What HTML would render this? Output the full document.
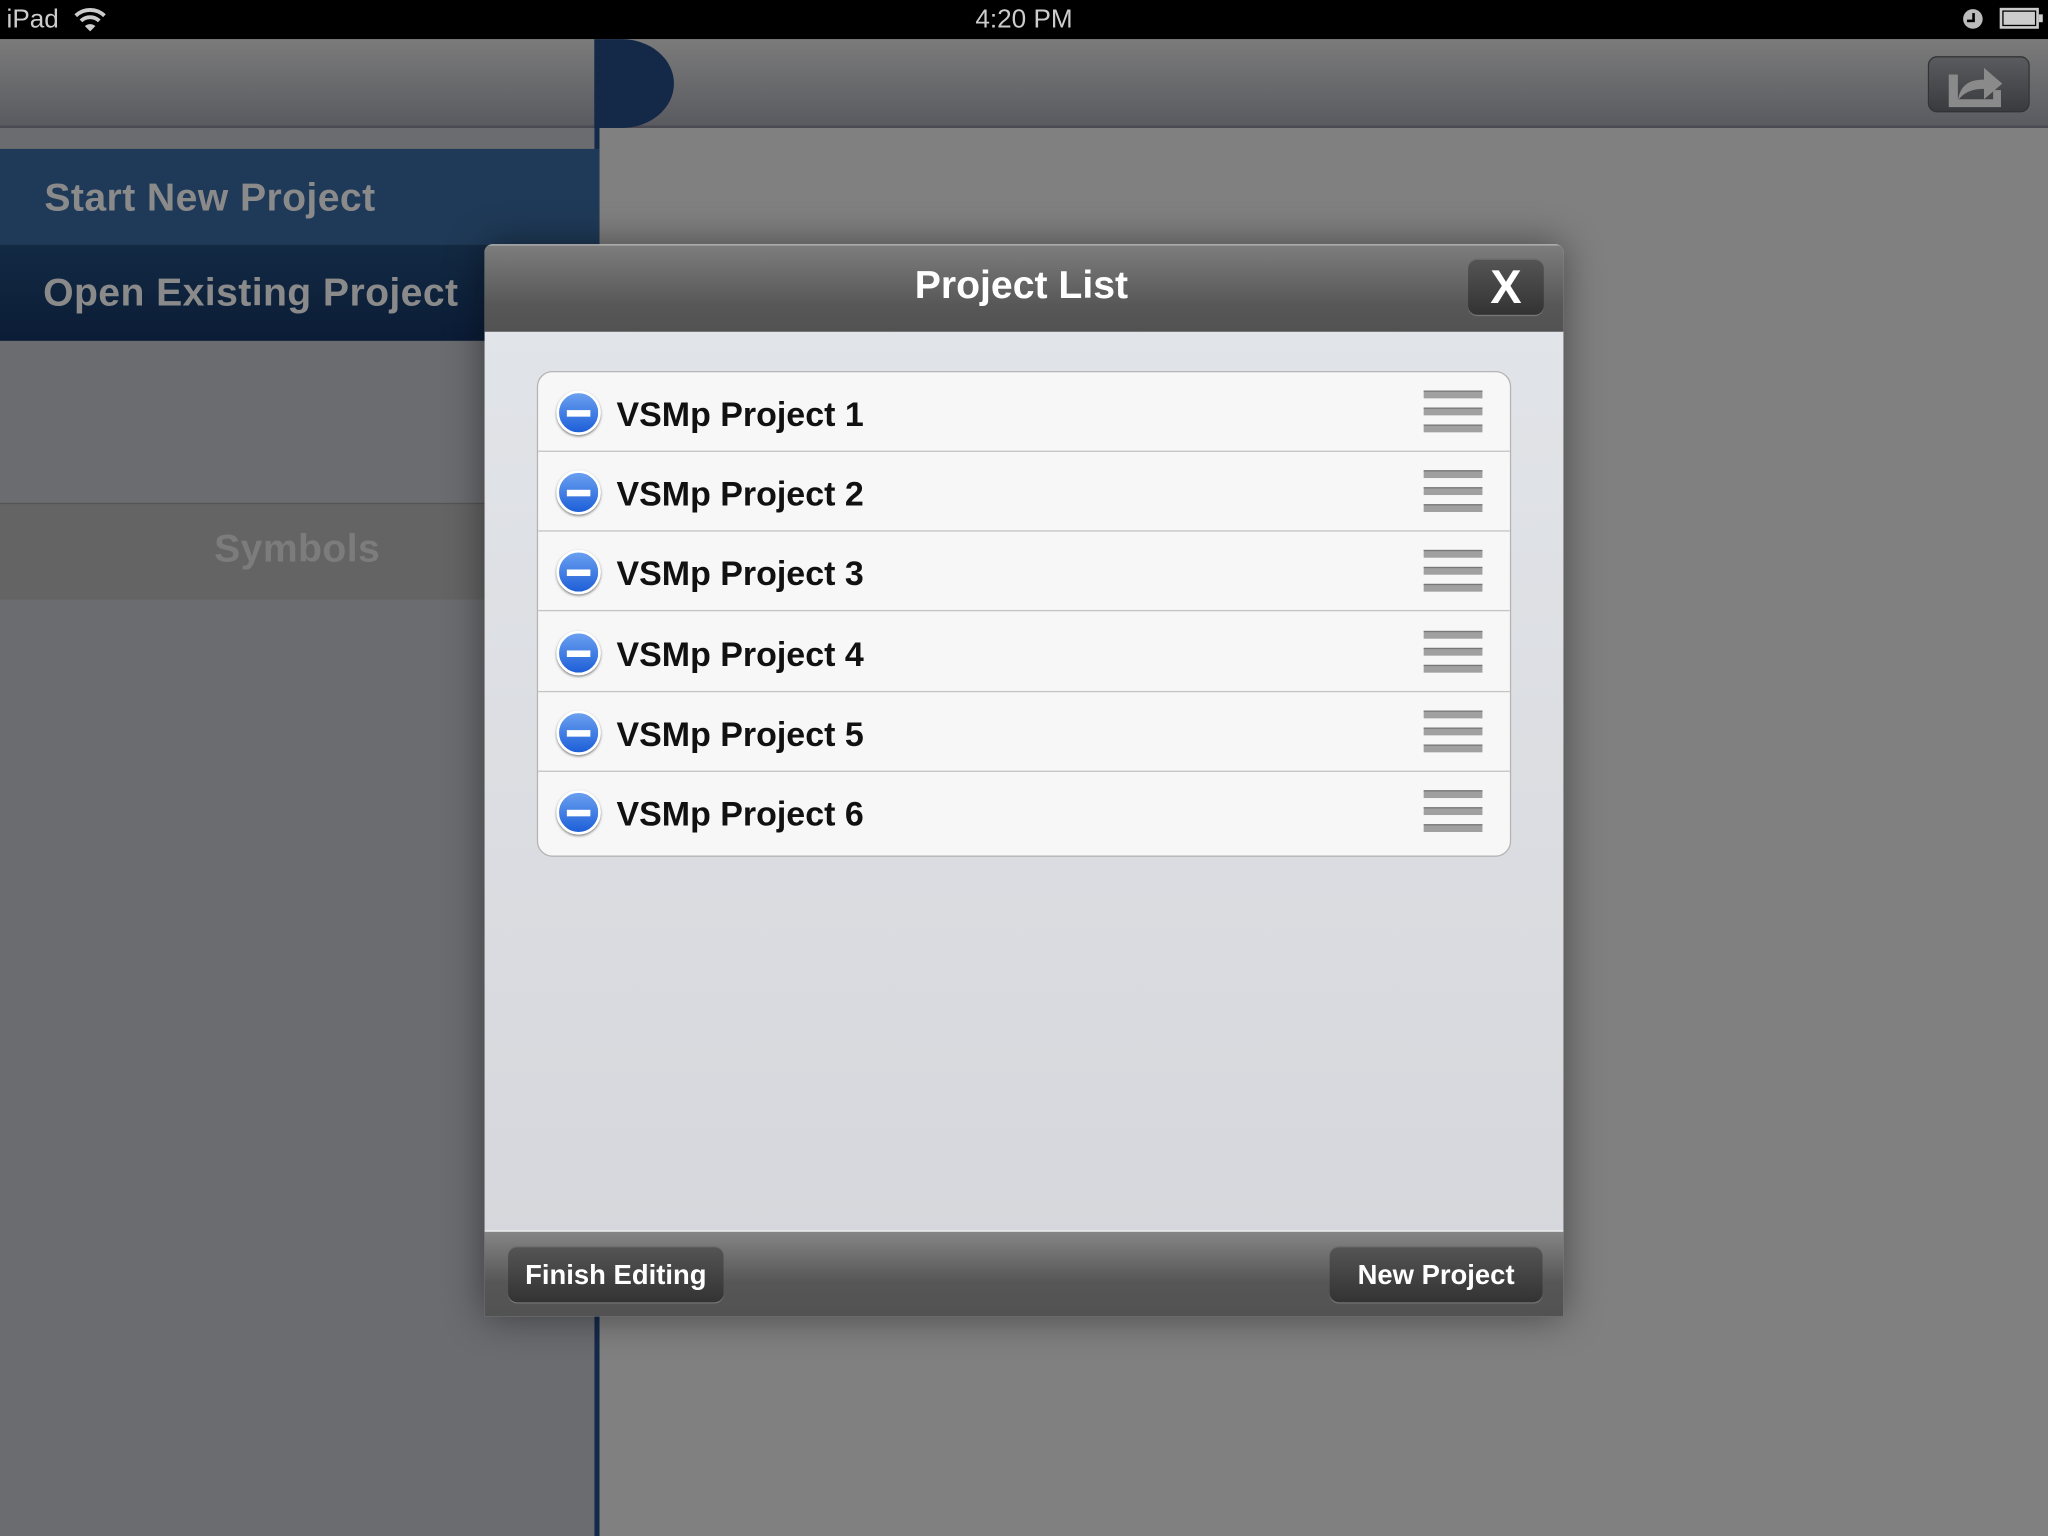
<!DOCTYPE html>
<html><head><meta charset="utf-8"><style>
*{margin:0;padding:0;box-sizing:border-box}
html,body{width:2048px;height:1536px;overflow:hidden;background:#808080}
#w{position:absolute;left:0;top:0;width:1568px;height:1176px;transform:scale(1.306122);transform-origin:0 0;font-family:"Liberation Sans",sans-serif;background:#808080}
.a{position:absolute}
.row{position:absolute;left:0;right:0;height:61px;border-bottom:1px solid #c4c4c4}
.row .m{position:absolute;left:14px;top:14px;width:34px;height:34px;border-radius:50%;background:linear-gradient(#6aa0f0,#1e5fd8);border:2px solid #fff;box-shadow:0 1px 2px rgba(0,0,0,.5)}
.row .m:after{content:"";position:absolute;left:6px;top:13px;width:18px;height:5px;background:#fff}
.row .t{position:absolute;left:60px;top:17px;font-weight:bold;font-size:26px;color:#111}
.row .g{position:absolute;right:21px;top:14px;width:45px}
.row .g i{display:block;height:6px;background:#a0a0a0;border-top:1px solid #777;margin-bottom:7px}
.btn{position:absolute;height:43px;border-radius:7px;background:linear-gradient(#555,#333);color:#fff;font-weight:bold;font-size:21px;text-align:center;line-height:43px;box-shadow:inset 0 1px 0 rgba(255,255,255,.15),0 1px 0 rgba(255,255,255,.2)}
.lm{color:#8a8a8a;font-weight:bold;font-size:30px;letter-spacing:0.3px}
</style></head><body><div id="w">
<div class="a" style="left:0;top:0;width:1568px;height:30px;background:#000"></div>
<div class="a" style="left:5px;top:4px;color:#ccc;font-size:20px">iPad</div>
<svg class="a" style="left:56px;top:4px" width="26" height="22" viewBox="0 0 26 22"><path d="M2 8 A16 16 0 0 1 24 8" stroke="#ccc" stroke-width="3" fill="none"/><path d="M6 12 A10 10 0 0 1 20 12" stroke="#ccc" stroke-width="3" fill="none"/><path d="M9 16 L13 20 L17 16 A6 6 0 0 0 9 16Z" fill="#ccc"/></svg>
<div class="a" style="left:0;width:1568px;top:4px;text-align:center;color:#ccc;font-size:20px">4:20 PM</div>
<div class="a" style="left:1503px;top:7px;width:15px;height:15px;border-radius:50%;background:#bbb"></div>
<div class="a" style="left:1510px;top:10px;width:2px;height:6px;background:#000"></div>
<div class="a" style="left:1506px;top:15px;width:6px;height:2px;background:#000"></div>
<div class="a" style="left:1531px;top:6px;width:30px;height:16px;border:2px solid #ccc;padding:1px"><div style="background:#ccc;height:100%"></div></div>
<div class="a" style="left:1561px;top:11px;width:3px;height:6px;background:#ccc"></div>
<div class="a" style="left:0;top:30px;width:1568px;height:68px;background:linear-gradient(#7b7b7b,#5a5b60);border-bottom:2px solid #4a4a52"></div>
<div class="a" style="left:455px;top:30px;width:61px;height:68px;background:#142848;border-radius:0 40px 40px 0/0 34px 34px 0"></div>
<div class="a" style="left:1476px;top:43px;width:78px;height:43px;border-radius:7px;background:linear-gradient(#5a5b5f,#3a3b3f);border:1px solid #333"></div>
<svg class="a" style="left:1490px;top:47px" width="50" height="36" viewBox="0 0 50 36"><path d="M2 10 H9 V29 H36 V22 H42 V35 H2Z" fill="#8a8a8a"/><path d="M9 30 C11 17 19 14 29 14 V5 L43 17 L29 29 V21 C21 21 14 23 9 30Z" fill="#8a8a8a"/></svg>
<div class="a" style="left:455px;top:98px;width:4px;height:1078px;background:#152a4a"></div>
<div class="a" style="left:0;top:98px;width:455px;height:16px;background:#6b6c70"></div>
<div class="a" style="left:0;top:114px;width:459px;height:73px;background:#1f3a58"></div>
<div class="a lm" style="left:34px;top:135px">Start New Project</div>
<div class="a" style="left:0;top:187px;width:459px;height:74px;background:linear-gradient(#132a44,#0b1c36)"></div>
<div class="a lm" style="left:33px;top:208px">Open Existing Project</div>
<div class="a" style="left:0;top:261px;width:455px;height:124px;background:#6b6c70"></div>
<div class="a" style="left:0;top:385px;width:455px;height:74px;background:#646464;border-top:1px solid #555"></div>
<div class="a lm" style="left:0;width:455px;top:404px;text-align:center;color:#7c7c7c">Symbols</div>
<div class="a" style="left:0;top:459px;width:455px;height:717px;background:#6b6c70"></div>
<div class="a" style="left:371px;top:187px;width:826px;height:821px;box-shadow:0 0 30px rgba(0,0,0,.45);background:linear-gradient(#e2e5e9,#d5d6db);border-radius:6px 6px 0 0;overflow:hidden">
 <div class="a" style="left:0;top:0;width:826px;height:67px;background:linear-gradient(#7d7d7d,#575757 70%,#525252);border-top:1px solid #aaa"></div>
 <div class="a" style="left:0;width:822px;top:15px;text-align:center;color:#fff;font-weight:bold;font-size:30px">Project List</div>
 <div class="btn" style="left:753px;top:11px;width:58px;height:43px;font-size:36px;line-height:43px">X</div>
 <div class="a" style="left:40px;top:97px;width:746px;height:372px;background:#f7f7f7;border:1px solid #b5b5b5;border-radius:12px;overflow:hidden">
  <div class="row" style="top:0"><div class="m"></div><div class="t">VSMp Project 1</div><div class="g"><i></i><i></i><i></i></div></div>
  <div class="row" style="top:61px"><div class="m"></div><div class="t">VSMp Project 2</div><div class="g"><i></i><i></i><i></i></div></div>
  <div class="row" style="top:122px"><div class="m"></div><div class="t">VSMp Project 3</div><div class="g"><i></i><i></i><i></i></div></div>
  <div class="row" style="top:184px"><div class="m"></div><div class="t">VSMp Project 4</div><div class="g"><i></i><i></i><i></i></div></div>
  <div class="row" style="top:245px"><div class="m"></div><div class="t">VSMp Project 5</div><div class="g"><i></i><i></i><i></i></div></div>
  <div class="row" style="top:306px;border:0"><div class="m"></div><div class="t">VSMp Project 6</div><div class="g"><i></i><i></i><i></i></div></div>
 </div>
 <div class="a" style="left:0;top:755px;width:826px;height:66px;background:linear-gradient(#858585,#565656 60%,#525252);border-top:1px solid #eee"></div>
 <div class="btn" style="left:18px;top:767px;width:165px;line-height:45px">Finish Editing</div>
 <div class="btn" style="left:647px;top:767px;width:163px;line-height:45px">New Project</div>
</div>
</div></body></html>
